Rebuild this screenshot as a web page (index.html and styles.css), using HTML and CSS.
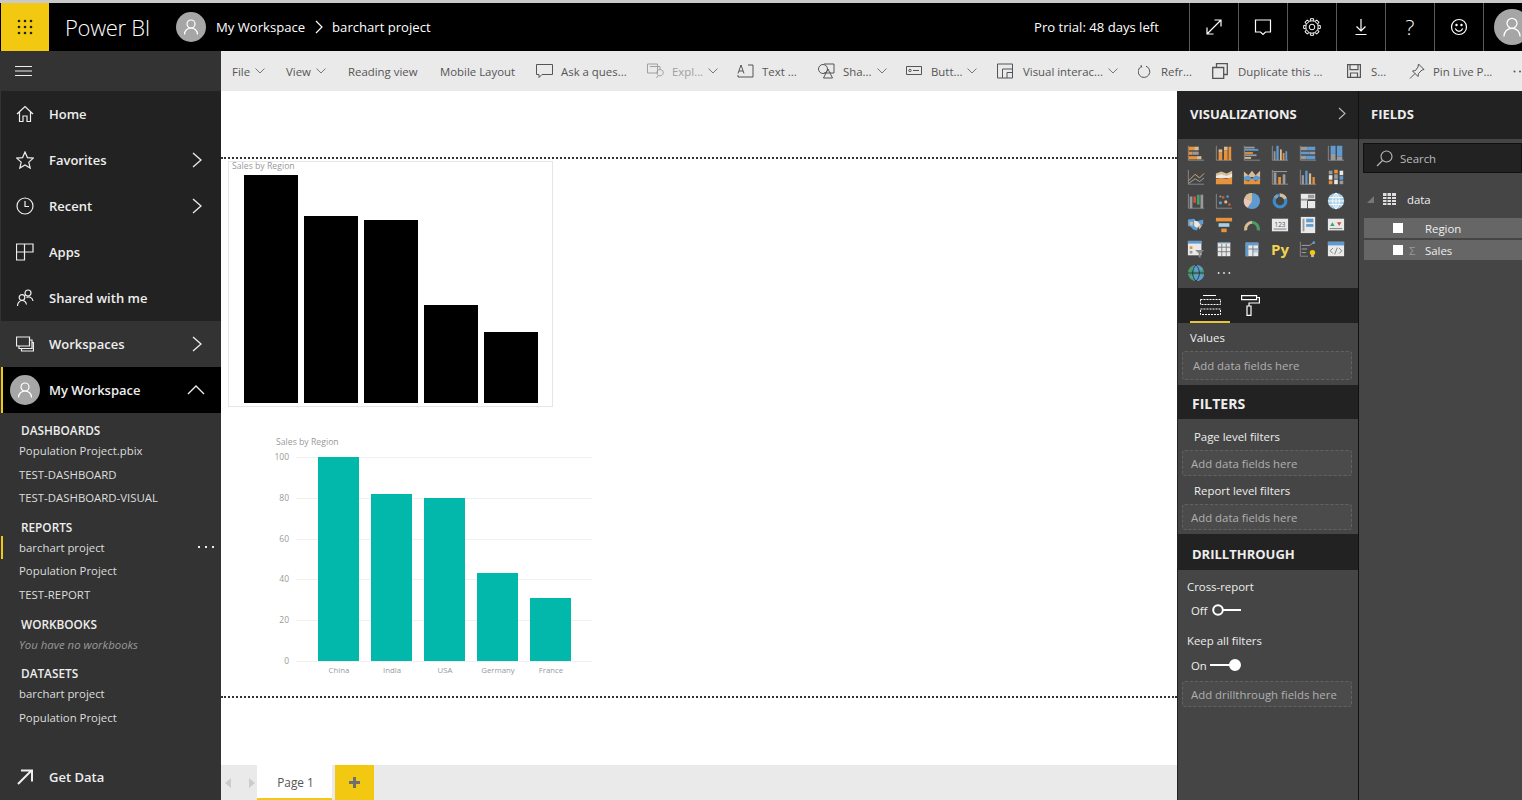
FILE: index.html
```html
<!DOCTYPE html>
<html lang="en">
<head>
    <meta charset="UTF-8">
    <title>Power BI - barchart project</title>
    <link rel="stylesheet" href="styles.css">
</head>
<body>

<div class="topbar">
    <div class="waffle">
        <svg width="16" height="16" viewBox="0 0 16 16" fill="#222"><circle cx="2" cy="2" r="1.3"/><circle cx="8" cy="2" r="1.3"/><circle cx="14" cy="2" r="1.3"/><circle cx="2" cy="8" r="1.3"/><circle cx="8" cy="8" r="1.3"/><circle cx="14" cy="8" r="1.3"/><circle cx="2" cy="14" r="1.3"/><circle cx="8" cy="14" r="1.3"/><circle cx="14" cy="14" r="1.3"/></svg>
    </div>
    <div class="brand">Power BI</div>
    <div class="avatar">
        <svg width="16" height="16" viewBox="0 0 16 16" fill="none" stroke="#fff" stroke-width="1.2"><circle cx="8" cy="5" r="4"/><path d="M1.500 15.500c0-4 3-6.500 6.500-6.500s6.500 2.500 6.500 6.500"/></svg>
    </div>
    <div class="crumb">My Workspace</div>
    <svg class="crumb-sep" width="8" height="14" viewBox="0 0 8 14" fill="none" stroke="#fff" stroke-width="1.2"><path d="M1 1l6 6-6 6"/></svg>
    <div class="crumb">barchart project</div>
    <div class="trial">Pro trial: 48 days left</div>
    <div class="topicon"><svg width="18" height="18" viewBox="0 0 18 18" fill="none" stroke="#fff" stroke-width="1.2"><path d="M2 16L16 2M9.500 2H16V8.500M2 9.500V16H8.500"/></svg></div>
    <div class="topicon"><svg width="18" height="18" viewBox="0 0 18 18" fill="none" stroke="#fff" stroke-width="1.2"><path d="M1.500 2h15v12h-5l-2.500 2.500L6.500 14h-5z"/></svg></div>
    <div class="topicon"><svg width="18" height="18" viewBox="0 0 18 18" fill="none" stroke="#fff" stroke-width="1"><circle cx="9" cy="9" r="2.800"/><circle cx="9" cy="9" r="6.200"/><path id="tooth" d="M7.200 2.900L7.500 .7h3l.3 2.200M7.200 15.100l.3 2.200h3l.3-2.200"/><use href="#tooth" transform="rotate(45 9 9)"/><use href="#tooth" transform="rotate(90 9 9)"/><use href="#tooth" transform="rotate(135 9 9)"/></svg></div>
    <div class="topicon"><svg width="18" height="18" viewBox="0 0 18 18" fill="none" stroke="#fff" stroke-width="1.2"><path d="M9 1v12M4.500 8.500L9 13l4.500-4.500M3.500 16.500h11"/></svg></div>
    <div class="topicon help">?</div>
    <div class="topicon"><svg width="18" height="18" viewBox="0 0 18 18" fill="none" stroke="#fff" stroke-width="1.2"><circle cx="9" cy="9" r="7.500"/><path d="M5.200 10.500c1 2 2.300 2.800 3.800 2.800s2.800-.8 3.800-2.800"/><circle cx="6.500" cy="7" r=".6"/><circle cx="11.500" cy="7" r=".6"/></svg></div>
    <div class="topicon last">
        <div class="avatar big">
            <svg width="20" height="20" viewBox="0 0 16 16" fill="none" stroke="#fff" stroke-width="1"><circle cx="8" cy="5" r="4"/><path d="M1.500 15.500c0-4 3-6.500 6.500-6.500s6.500 2.500 6.500 6.500"/></svg>
        </div>
    </div>
</div>

<div class="below">
    <div class="sidebar">
        <div class="burger">
            <svg width="17" height="10" viewBox="0 0 17 10" stroke="#eee" stroke-width="1"><path d="M0 .5h17M0 5h17M0 9.500h17"/></svg>
        </div>
        <div class="nav-row">
            <svg class="nav-icon" width="18" height="18" viewBox="0 0 18 18" fill="none" stroke="#eee" stroke-width="1.200"><path d="M1 9l8-7.500L17 9M3.500 7v9.500h3.500v-5.500h4v5.500h3.500V7"/></svg>
            <span>Home</span>
        </div>
        <div class="nav-row">
            <svg class="nav-icon" width="18" height="18" viewBox="0 0 18 18" fill="none" stroke="#eee" stroke-width="1.200"><path d="M9 1l2.400 5.600 6 .5-4.600 4 1.400 6L9 14l-5.200 3.100 1.400-6-4.600-4 6-.5z"/></svg>
            <span>Favorites</span>
            <svg class="nav-arrow" width="10" height="16" viewBox="0 0 10 16" fill="none" stroke="#eee" stroke-width="1.300"><path d="M1 1l8 7-8 7"/></svg>
        </div>
        <div class="nav-row">
            <svg class="nav-icon" width="18" height="18" viewBox="0 0 18 18" fill="none" stroke="#eee" stroke-width="1.200"><circle cx="9" cy="9" r="8"/><path d="M9 4v5.500h4"/></svg>
            <span>Recent</span>
            <svg class="nav-arrow" width="10" height="16" viewBox="0 0 10 16" fill="none" stroke="#eee" stroke-width="1.300"><path d="M1 1l8 7-8 7"/></svg>
        </div>
        <div class="nav-row">
            <svg class="nav-icon" width="18" height="18" viewBox="0 0 18 18" fill="none" stroke="#eee" stroke-width="1.200"><path d="M.5 1h8v8h-8zM8.500 1h8.500v8h-8.500M.5 9h8v8h-8z"/></svg>
            <span>Apps</span>
        </div>
        <div class="nav-row">
            <svg class="nav-icon" width="18" height="18" viewBox="0 0 18 18" fill="none" stroke="#eee" stroke-width="1.200"><circle cx="12" cy="4" r="3"/><circle cx="6" cy="8.500" r="2.800"/><path d="M1.500 17c0-3 2-5.500 4.500-5.500s4 1.500 4.500 4M10.500 8.500c2-1.500 6-.5 6.500 3.500"/></svg>
            <span>Shared with me</span>
        </div>
        <div class="nav-row alt">
            <svg class="nav-icon" width="18" height="18" viewBox="0 0 18 18" fill="none" stroke="#eee" stroke-width="1.200"><path d="M.5 2h13v9H.5zM3 11v2.500h13V5h-2.500M5.500 13.500V16h12V7.500H16"/></svg>
            <span>Workspaces</span>
            <svg class="nav-arrow" width="10" height="16" viewBox="0 0 10 16" fill="none" stroke="#eee" stroke-width="1.300"><path d="M1 1l8 7-8 7"/></svg>
        </div>
        <div class="nav-row mine">
            <div class="avatar">
                <svg width="16" height="16" viewBox="0 0 16 16" fill="none" stroke="#fff" stroke-width="1.200"><circle cx="8" cy="5" r="4"/><path d="M1.500 15.500c0-4 3-6.500 6.500-6.500s6.500 2.500 6.500 6.500"/></svg>
            </div>
            <span>My Workspace</span>
            <svg class="nav-arrow up" width="18" height="10" viewBox="0 0 18 10" fill="none" stroke="#eee" stroke-width="1.300"><path d="M1 9l8-8 8 8"/></svg>
        </div>

        <div class="sec">
            <div class="sec-head">DASHBOARDS</div>
            <div class="sec-item">Population Project.pbix</div>
            <div class="sec-item">TEST-DASHBOARD</div>
            <div class="sec-item">TEST-DASHBOARD-VISUAL</div>
        </div>
        <div class="sec">
            <div class="sec-head">REPORTS</div>
            <div class="sec-item current">barchart project<span class="more"></span></div>
            <div class="sec-item">Population Project</div>
            <div class="sec-item">TEST-REPORT</div>
        </div>
        <div class="sec">
            <div class="sec-head">WORKBOOKS</div>
            <div class="sec-item none">You have no workbooks</div>
        </div>
        <div class="sec">
            <div class="sec-head">DATASETS</div>
            <div class="sec-item">barchart project</div>
            <div class="sec-item">Population Project</div>
        </div>

        <div class="nav-row getdata">
            <svg class="nav-icon" width="18" height="18" viewBox="0 0 18 18" fill="none" stroke="#eee" stroke-width="2"><path d="M2 16L15.500 2.500M5 2.500h11v11"/></svg>
            <span>Get Data</span>
        </div>
    </div>

    <div class="main">
        <div class="toolbar">
            <div class="tb">File <svg class="chev" width="10" height="6" viewBox="0 0 10 6"><path d="M.5.5L5 5 9.500.5"/></svg></div>
            <div class="tb">View <svg class="chev" width="10" height="6" viewBox="0 0 10 6"><path d="M.5.5L5 5 9.500.5"/></svg></div>
            <div class="tb">Reading view</div>
            <div class="tb">Mobile Layout</div>
            <div class="tb"><svg class="tbi" width="17" height="16" viewBox="0 0 17 16"><path d="M.5 1.500h16v10H6l-3 3v-3H.5z"/></svg>Ask a ques...</div>
            <div class="tb off"><svg class="tbi" width="17" height="16" viewBox="0 0 17 16"><path d="M.5 1h10v9H.5zM3 3.500h10v3M13 6.500a3.200 3.200 0 1 0 .1 0M11 12.500L9.500 15"/></svg>Expl... <svg class="chev" width="10" height="6" viewBox="0 0 10 6"><path d="M.5.5L5 5 9.500.5"/></svg></div>
            <div class="tb"><svg class="tbi" width="17" height="16" viewBox="0 0 17 16"><path d="M1 10.500L4 2l3 8.500M2 8h4M11 2h5v12H1v-2"/></svg>Text ...</div>
            <div class="tb"><svg class="tbi" width="17" height="16" viewBox="0 0 17 16"><circle cx="5" cy="6" r="4.500"/><path d="M6 1h10v9H6M10 6l-4.500 9h9z"/></svg>Sha... <svg class="chev" width="10" height="6" viewBox="0 0 10 6"><path d="M.5.5L5 5 9.500.5"/></svg></div>
            <div class="tb"><svg class="tbi btn" width="16" height="16" viewBox="0 0 16 16"><path d="M.5 3.500h15v8H.5zM7 7.500h6"/><circle cx="4" cy="7.500" r="1.200"/></svg>Butt... <svg class="chev" width="10" height="6" viewBox="0 0 10 6"><path d="M.5.5L5 5 9.500.5"/></svg></div>
            <div class="tb"><svg class="tbi wide" width="16" height="16" viewBox="0 0 16 16"><path d="M.5 1h15v14H.5zM5.500 15V6h10M10 15V9.500h5.500"/></svg>Visual interac... <svg class="chev" width="10" height="6" viewBox="0 0 10 6"><path d="M.5.5L5 5 9.500.5"/></svg></div>
            <div class="tb"><svg class="tbi wide" width="13" height="14" viewBox="0 0 13 14"><path d="M8 2.200a5.800 5.800 0 1 1-4.500.2M3 1l.8 2.500"/></svg>Refr...</div>
            <div class="tb"><svg class="tbi dup" width="16" height="16" viewBox="0 0 16 16"><path stroke-width="1.300" d="M4.500 4V.7h10.800v10.800H12M.7 4.500h11v11H.7z"/></svg>Duplicate this ...</div>
            <div class="tb"><svg class="tbi dup" width="14" height="14" viewBox="0 0 14 14"><path stroke-width="1.200" d="M.6.6h12.800v12.800H.6zM3 .6v5h8V.6M3.500 13.400V9h7v4.400"/></svg>S...</div>
            <div class="tb"><svg class="tbi" width="16" height="16" viewBox="0 0 16 16"><path d="M9.500 1l5.500 5.500-2 .5-3.500 3.500-.5 3L3.500 8l3-.5L9 4zM6 10.500L1 15.500"/></svg>Pin Live P...</div>
            <div class="tb"><svg width="9" height="3" viewBox="0 0 9 3" fill="#555"><circle cx="1.500" cy="1.500" r="1"/><circle cx="7" cy="1.500" r="1"/></svg></div>
        </div>

        <div class="work">
            <div class="report">
                <div class="canvas">
                    <div class="page">
                        <div class="visual-black">
                            <div class="v-title">Sales by Region</div>
                            <div class="black-bars">
                                <div class="bbar" style="height: 228px"></div>
                                <div class="bbar" style="height: 187px"></div>
                                <div class="bbar" style="height: 183px"></div>
                                <div class="bbar" style="height: 98px"></div>
                                <div class="bbar" style="height: 71px"></div>
                            </div>
                        </div>
                        <svg class="visual-chart" width="330" height="250" viewBox="270 432 330 250">
                            <text class="c-title" x="276" y="445">Sales by Region</text>
                            <path class="c-grid" d="M296 457.500H592M296 498.500H592M296 539.500H592M296 579.500H592M296 620.500H592M296 661.500H592"/>
                            <text class="c-y" x="289" y="460">100</text>
                            <text class="c-y" x="289" y="501">80</text>
                            <text class="c-y" x="289" y="542">60</text>
                            <text class="c-y" x="289" y="582">40</text>
                            <text class="c-y" x="289" y="623">20</text>
                            <text class="c-y" x="289" y="664">0</text>
                            <rect class="c-bar" x="318" y="457" width="41" height="204"/>
                            <rect class="c-bar" x="371" y="494" width="41" height="167"/>
                            <rect class="c-bar" x="424" y="498" width="41" height="163"/>
                            <rect class="c-bar" x="477" y="573" width="41" height="88"/>
                            <rect class="c-bar" x="530" y="598" width="41" height="63"/>
                            <text class="c-x" x="339" y="673">China</text>
                            <text class="c-x" x="392" y="673">India</text>
                            <text class="c-x" x="445" y="673">USA</text>
                            <text class="c-x" x="498" y="673">Germany</text>
                            <text class="c-x" x="551" y="673">France</text>
                        </svg>
                    </div>
                </div>
                <div class="tabs">
                    <svg class="tab-nav" width="34" height="10" viewBox="0 0 34 10" fill="#ccc"><path d="M8 0v10L2 5zM26 0v10l6-5z"/></svg>
                    <div class="tab">Page 1</div>
                    <div class="tab-add">
                        <svg width="11" height="11" viewBox="0 0 11 11" fill="#6f6f6f"><path d="M4 0h3v4h4v3H7v4H4V7H0V4h4z"/></svg>
                    </div>
                </div>
            </div>

            <div class="viz">
                <div class="pane-head">VISUALIZATIONS
                    <svg class="pane-arrow" width="8" height="13" viewBox="0 0 8 13" fill="none" stroke="#bbb" stroke-width="1.100"><path d="M1 1l6 5.500L1 12"/></svg>
                </div>
                <div class="viz-icons">
                    <svg viewBox="0 0 20 20"><path class="ax" d="M1.500 2v16H19"/><rect class="o" x="2" y="3" width="6" height="4"/><rect class="t" x="8" y="3" width="5" height="4"/><rect class="o" x="2" y="8.500" width="4" height="3.500"/><rect class="g" x="6" y="8.500" width="7" height="3.500"/><rect class="o" x="2" y="13.500" width="9" height="3.500"/><rect class="t" x="11" y="13.500" width="5" height="3.500"/></svg>
                    <svg viewBox="0 0 20 20"><path class="ax" d="M1.500 2v16H19"/><rect class="o" x="4" y="9" width="4" height="9"/><rect class="t" x="4" y="6" width="4" height="3"/><rect class="o" x="10" y="7" width="4" height="11"/><rect class="t" x="10" y="3" width="4" height="4"/><rect class="o" x="15" y="3" width="3" height="15"/></svg>
                    <svg viewBox="0 0 20 20"><path class="ax" d="M1.500 2v16H19"/><rect class="g" x="2" y="3" width="11" height="2"/><rect class="b" x="2" y="5.500" width="15" height="2"/><rect class="o" x="2" y="9" width="9" height="2"/><rect class="g" x="2" y="11.500" width="13" height="2"/><rect class="t" x="2" y="14.500" width="7" height="2"/></svg>
                    <svg viewBox="0 0 20 20"><path class="ax" d="M1.500 2v16H19"/><rect class="g" x="3" y="8" width="2" height="10"/><rect class="b" x="6" y="2" width="2.500" height="16"/><rect class="t" x="10" y="6" width="2" height="12"/><rect class="o" x="13" y="10" width="2" height="8"/><rect class="b" x="16" y="8" width="2" height="10"/></svg>
                    <svg viewBox="0 0 20 20"><path class="ax" d="M1.500 2v16H19"/><rect class="g" x="2" y="3" width="7" height="4"/><rect class="b" x="9" y="3" width="9" height="4"/><rect class="b" x="2" y="8.500" width="10" height="3"/><rect class="g" x="12" y="8.500" width="6" height="3"/><rect class="g" x="2" y="13" width="6" height="4"/><rect class="b" x="8" y="13" width="10" height="4"/></svg>
                    <svg viewBox="0 0 20 20"><path class="ax" d="M1.500 2v16H19"/><rect class="b" x="4" y="2" width="5.500" height="9"/><rect class="g" x="4" y="11" width="5.500" height="7"/><rect class="b" x="11" y="2" width="6" height="12"/><rect class="g" x="11" y="14" width="6" height="4"/></svg>

                    <svg viewBox="0 0 20 20"><path class="ax" d="M1.500 2v16H19"/><path class="ln-o" d="M2 14l7-7 5 4 5-5"/><path class="ln-g" d="M2 17l7-5 5 3 5-4"/></svg>
                    <svg viewBox="0 0 20 20"><path class="t" d="M1 6l6-2 6 2 6-3v6H1z"/><path class="w" d="M1 9l6-2 6 2 6-3v5H1z"/><path class="o" d="M1 12l6-1 6 1 6-2v8H1z"/></svg>
                    <svg viewBox="0 0 20 20"><path class="t" d="M1 4l5 4 4-5 4 5 5-5v7H1z"/><path class="b" d="M1 10l5-2 4 4 4-4 5 2v4H1z"/><path class="o" d="M1 13l5 2 4-3 4 3 5-3v6H1z"/></svg>
                    <svg viewBox="0 0 20 20"><path class="ax" d="M1.500 2v16H19"/><rect class="g" x="3" y="5" width="3" height="13"/><rect class="o" x="8" y="10" width="3" height="8"/><rect class="g" x="13" y="7" width="3" height="11"/><path class="ln-g" d="M2 4h16"/></svg>
                    <svg viewBox="0 0 20 20"><path class="ax" d="M1.500 2v16H19"/><rect class="g" x="3" y="8" width="2.500" height="10"/><rect class="b" x="7" y="3" width="2.500" height="15"/><rect class="t" x="11" y="6" width="2.500" height="12"/><rect class="o" x="15" y="10" width="2.500" height="8"/></svg>
                    <svg viewBox="0 0 20 20"><rect class="g" x="2" y="3" width="4" height="4"/><rect class="w" x="2" y="8" width="4" height="5"/><rect class="o" x="2" y="14" width="4" height="4"/><rect class="o" x="8" y="2" width="4" height="4"/><rect class="g" x="8" y="7" width="4" height="5"/><rect class="w" x="8" y="13" width="4" height="5"/><rect class="w" x="14" y="3" width="4" height="5"/><rect class="b" x="14" y="9" width="4" height="4"/><rect class="g" x="14" y="14" width="4" height="4"/></svg>

                    <svg viewBox="0 0 20 20"><path class="ax" d="M1.500 2v16H19"/><rect class="g" x="3" y="5" width="3" height="13"/><rect class="r" x="7" y="5" width="3" height="7"/><rect class="gn" x="11" y="3" width="3" height="11"/><rect class="g" x="15" y="3" width="3" height="15"/></svg>
                    <svg viewBox="0 0 20 20"><path class="ax" d="M1.500 2v16H19"/><circle class="b" cx="6" cy="12" r="1.800"/><circle class="r" cx="9" cy="6" r="1.500"/><circle class="t" cx="12" cy="11" r="1.800"/><circle class="b" cx="14" cy="5" r="1.300"/><circle class="r" cx="16" cy="14" r="1.500"/><circle class="g" cx="6" cy="5" r="1.200"/></svg>
                    <svg viewBox="0 0 20 20"><circle class="b" cx="10" cy="10" r="9"/><path class="t" d="M10 10L1.500 7A9 9 0 0 1 10 1z"/><path class="p" d="M10 10L1.500 7A9 9 0 0 0 5 17.500z"/></svg>
                    <svg viewBox="0 0 20 20"><circle class="ring-b" cx="10" cy="10" r="6.500"/><path class="ring-t" d="M10 3.500a6.500 6.500 0 0 1 6 4"/><path class="ring-g" d="M4.500 6.500a6.500 6.500 0 0 1 3-2.500"/></svg>
                    <svg viewBox="0 0 20 20"><rect class="w" x="2" y="2" width="16" height="6"/><rect class="g" x="10" y="3" width="7" height="4"/><rect class="w" x="2" y="9" width="7" height="9"/><rect class="w" x="10" y="10" width="8" height="8"/><rect class="g" x="2" y="7.500" width="8" height="2"/></svg>
                    <svg viewBox="0 0 20 20"><circle class="lb" cx="10" cy="10" r="9"/><path class="ln-w" d="M1 10h18M2 6h16M2 14h16M10 1v18M10 1c-5 5-5 13 0 18M10 1c5 5 5 13 0 18"/></svg>

                    <svg viewBox="0 0 20 20"><path class="b" d="M1 4l7-1 2 3 8-2v5l-5 2-2 5-4-1-3-3-3-1z"/><path class="w" d="M8 5l4 1 3 4-4 3-3-2z"/><path class="t" d="M3 6l4 1-1 4-3-1zM12 11l5-1-3 5z"/></svg>
                    <svg viewBox="0 0 20 20"><rect class="o" x="1" y="2" width="18" height="4"/><rect class="lb" x="4" y="8" width="12" height="4"/><rect class="o" x="7" y="14" width="6" height="4"/></svg>
                    <svg viewBox="0 0 20 20"><path class="ring-t" d="M3 16a7.500 7.500 0 0 1 7-9"/><path class="ring-gn" d="M10 7a7.500 7.500 0 0 1 7 9"/></svg>
                    <svg viewBox="0 0 20 20"><rect class="w" x="1" y="3" width="18" height="14"/><text class="mini" x="10" y="12">123</text><path class="ln-d" d="M3 14.500h14"/></svg>
                    <svg viewBox="0 0 20 20"><rect class="w" x="2" y="1" width="16" height="18"/><rect class="b" x="8" y="3" width="8" height="4"/><rect class="g" x="4" y="3" width="2" height="14"/><rect class="b" x="8" y="9" width="8" height="3"/></svg>
                    <svg viewBox="0 0 20 20"><rect class="w" x="1" y="3" width="18" height="13"/><path class="gn" d="M3.500 11l2.500-4 2.500 4z"/><path class="r" d="M11 7h5l-2.500 4z"/><path class="ln-d" d="M3 14h14"/></svg>

                    <svg viewBox="0 0 20 20"><rect class="w" x="1" y="1" width="15" height="16"/><rect class="b" x="1" y="1" width="15" height="3"/><rect class="o" x="3" y="7" width="3" height="3"/><rect class="g" x="3" y="12" width="3" height="3"/><path class="g2" d="M9 11h10l-4 4v5l-2-1v-4z"/></svg>
                    <svg viewBox="0 0 20 20"><rect class="w" x="3" y="3" width="14" height="15"/><path class="ln-d" d="M3 8h14M3 13h14M7.500 3v15M12.500 3v15"/><rect class="lb" x="3" y="3" width="14" height="1.500"/></svg>
                    <svg viewBox="0 0 20 20"><rect class="w" x="3" y="3" width="14" height="15"/><rect class="b" x="3" y="3" width="14" height="3"/><rect class="b" x="3" y="3" width="3" height="15"/><rect class="lb" x="11" y="10" width="6" height="4"/><path class="ln-d" d="M6 10h11M11 6v12"/></svg>
                    <div class="py">Py</div>
                    <svg viewBox="0 0 20 20"><path class="ax" d="M1.500 2v16H10"/><path class="ln-g" d="M3 6h9M3 10h6M3 14h5M12 6l4-3"/><circle class="b" cx="16.500" cy="3" r="1.500"/><circle class="y" cx="15" cy="14" r="3"/><rect class="t" x="13.500" y="16" width="3" height="3"/></svg>
                    <svg viewBox="0 0 20 20"><rect class="w" x="1" y="2" width="18" height="16"/><rect class="b" x="1" y="2" width="18" height="4"/><path class="ln-d" d="M6.500 9L3.500 12l3 3M13.500 9l3 3-3 3M11.500 8.500l-3 7.500"/></svg>

                    <svg viewBox="0 0 20 20"><circle class="gn" cx="10" cy="10" r="9"/><path class="b" d="M10 1a9 9 0 0 1 8 5l-7 3-6-3zM3 14l8-3 8 1a9 9 0 0 1-7 7z"/><path class="ln-k" d="M1 10h18M10 1c-5 5-5 13 0 18M10 1c5 5 5 13 0 18"/></svg>
                    <svg viewBox="0 0 20 20"><circle class="w" cx="4" cy="10" r="1"/><circle class="w" cx="10" cy="10" r="1"/><circle class="w" cx="16" cy="10" r="1"/></svg>
                </div>
                <div class="viz-tabs">
                    <div class="viz-tab on">
                        <svg width="21" height="20" viewBox="0 0 21 20" fill="none" stroke="#fff"><path d="M3 .5h13"/><path stroke-dasharray="2 1" d="M.5 4.500h20v5H.5zM.5 14h20v5.500H.5z"/></svg>
                    </div>
                    <div class="viz-tab">
                        <svg width="19" height="21" viewBox="0 0 19 21" fill="none" stroke="#fff" stroke-width="1.200"><path d="M.6.6h15v4H.6zM15.600 2.500h2.800v5.500H8v3M6 11h4v9.400H6z"/></svg>
                    </div>
                </div>

                <div class="well-label values">Values</div>
                <div class="well tall"><span class="well-text indent">Add data fields here</span></div>

                <div class="sec-bar filters">FILTERS</div>
                <div class="well-label first">Page level filters</div>
                <div class="well"><span class="well-text">Add data fields here</span></div>
                <div class="well-label">Report level filters</div>
                <div class="well"><span class="well-text">Add data fields here</span></div>

                <div class="sec-bar drill">DRILLTHROUGH</div>
                <div class="opt-label">Cross-report</div>
                <div class="toggle">Off
                    <svg width="32" height="14" viewBox="0 0 32 14" fill="none" stroke="#fff" stroke-width="2"><circle cx="9" cy="7" r="4.800"/><path d="M14 7h18"/></svg>
                </div>
                <div class="opt-label keep">Keep all filters</div>
                <div class="toggle on">On
                    <svg width="32" height="14" viewBox="0 0 32 14" fill="#fff" stroke="#fff" stroke-width="2"><path d="M0 7h20"/><circle cx="25" cy="7" r="5"/></svg>
                </div>
                <div class="well drillwell"><span class="well-text">Add drillthrough fields here</span></div>
            </div>

            <div class="fields">
                <div class="pane-head">FIELDS</div>
                <div class="search">
                    <svg width="17" height="17" viewBox="0 0 17 17" fill="none" stroke="#bbb" stroke-width="1.100"><circle cx="10.500" cy="6.500" r="5.500"/><path d="M6.500 10.500L1 16"/></svg>
                    Search
                </div>
                <div class="table-row">
                    <svg class="tri" width="7" height="7" viewBox="0 0 7 7" fill="#777"><path d="M7 0v7H0z"/></svg>
                    <svg class="grid-ic" width="13" height="12" viewBox="0 0 13 12" fill="#ddd"><path d="M0 0h13v12H0z"/><path stroke="#444" d="M0 3.500h13M0 6.500h13M0 9.500h13M4 0v12M8.500 0v12"/></svg>
                    <span>data</span>
                </div>
                <div class="field-row">
                    <span class="check"></span><span class="sigma"></span>Region
                </div>
                <div class="field-row">
                    <span class="check"></span><span class="sigma">&Sigma;</span>Sales
                </div>
            </div>
        </div>
    </div>
</div>

</body>
</html>
```

FILE: styles.css
```css
* {
    box-sizing: border-box;
}

html, body {
    margin: 0;
    height: 100%;
}

body {
    width: 1522px;
    height: 800px;
    overflow: hidden;
    font-family: "Open Sans", "Noto Sans", sans-serif;
    font-size: 11.400px;
    color: #eee;
    background-color: #333;
    display: flex;
    flex-direction: column;
}

/* top black bar */
.topbar {
    height: 51px;
    flex: none;
    display: flex;
    align-items: center;
    background-color: #000;
    border-top: 3px solid #c9c9c9;
    padding-left: 1px;
}

.waffle {
    width: 48px;
    height: 48px;
    background-color: #f2c811;
    display: flex;
    align-items: center;
    justify-content: center;
}

.brand {
    margin-left: 16px;
    width: 111px;
    font-size: 22px;
    font-weight: 300;
    letter-spacing: -0.3px;
    color: #fff;
}

.avatar {
    width: 30px;
    height: 30px;
    border-radius: 50%;
    background-color: #a6a6a6;
    display: flex;
    align-items: center;
    justify-content: center;
    flex: none;
}

.avatar.big {
    width: 36px;
    height: 36px;
}

.crumb {
    margin-left: 10px;
    font-size: 13.100px;
    color: #fff;
}

.crumb-sep {
    margin-left: 10px;
    margin-right: -1px;
}

.trial {
    margin-left: auto;
    width: 155px;
    font-size: 13.100px;
    color: #fff;
}

.topicon {
    width: 49px;
    height: 48px;
    border-left: 1px solid #5a5a5a;
    display: flex;
    align-items: center;
    justify-content: center;
    flex: none;
}

.topicon.help {
    font-size: 21px;
    font-weight: 300;
    color: #fff;
}

.topicon.last {
    width: 39px;
    padding-left: 10px;
    justify-content: flex-start;
    overflow: hidden;
}

/* everything under the top bar */
.below {
    flex: 1;
    display: flex;
    min-height: 0;
}

/* left navigation */
.sidebar {
    width: 221px;
    flex: none;
    background-color: #333;
    display: flex;
    flex-direction: column;
    padding-left: 1px;
}

.burger {
    height: 40px;
    display: flex;
    align-items: center;
    padding-left: 14px;
}

.nav-row {
    height: 46px;
    flex: none;
    background-color: #222;
    display: flex;
    align-items: center;
    padding-left: 15px;
    font-size: 13px;
    font-weight: 600;
    color: #eee;
}

.nav-row span {
    margin-left: 15px;
}

.nav-icon {
    flex: none;
}

.nav-arrow {
    margin-left: auto;
    margin-right: 19px;
}

.nav-arrow.up {
    margin-right: 16px;
}

.nav-row.alt {
    background-color: #333;
}

.nav-row.mine {
    background-color: #000;
    border-left: 2px solid #f2c811;
    padding-left: 7px;
}

.nav-row.mine span {
    margin-left: 9px;
}

.nav-row.getdata {
    background-color: #333;
    margin-top: auto;
}

.sec {
    padding-top: 8px;
}

.sec-head {
    height: 18px;
    line-height: 18px;
    padding-left: 20px;
    font-size: 11.800px;
    font-weight: 600;
    color: #eee;
}

.sec-item {
    height: 23.600px;
    line-height: 23.600px;
    padding-left: 18px;
    font-size: 11.400px;
    color: #ddd;
    position: relative;
}

.sec-item.current {
    border-left: 2px solid #f2c811;
    padding-left: 16px;
}

.sec-item.none {
    font-style: italic;
    color: #999;
}

/* three dots drawn with one box shadow each side */
.more {
    position: absolute;
    right: 14px;
    top: 10px;
    width: 2px;
    height: 2px;
    background-color: #eee;
    box-shadow: -7px 0 0 #eee, 7px 0 0 #eee;
}

/* middle + right */
.main {
    flex: 1;
    min-width: 0;
    display: flex;
    flex-direction: column;
}

.toolbar {
    height: 40px;
    flex: none;
    background-color: #eaeaea;
    padding-left: 11px;
    display: grid;
    grid-template-columns: 54px 62px 92px 96px 111px 90px 81px 88px 91px 141px 74px 135px 62px 104px 20px;
    align-items: center;
    color: #555;
    font-size: 11.400px;
    white-space: nowrap;
    overflow: hidden;
}

.tb {
    display: flex;
    align-items: center;
}

.tb.off {
    color: #a0a0a0;
}

.tbi {
    margin-right: 8px;
    fill: none;
    stroke: #555;
    stroke-width: 1;
    flex: none;
}

.tb.off .tbi {
    stroke: #a0a0a0;
}

.tbi.btn {
    margin-right: 9px;
}

.tbi.wide {
    margin-right: 10px;
}

.tbi.dup {
    margin-right: 10px;
}

.chev {
    margin-left: 5px;
    fill: none;
    stroke: #777;
    stroke-width: 1;
    flex: none;
}

.work {
    flex: 1;
    display: flex;
    min-height: 0;
}

/* report canvas */
.report {
    width: 956px;
    flex: none;
    display: flex;
    flex-direction: column;
    background-color: #fff;
}

.canvas {
    flex: 1;
    padding-top: 66px;
    min-height: 0;
}

.page {
    position: relative;
    height: 541px;
    border-top: 2px dotted #333;
    border-bottom: 2px dotted #333;
}

.visual-black {
    position: absolute;
    left: 7px;
    top: 2px;
    width: 325px;
    height: 246px;
    border: 1px solid #e6e6e6;
    padding: 0 14px 3px 15px;
    display: flex;
    flex-direction: column;
}

.v-title {
    position: absolute;
    left: 3px;
    top: -2px;
    font-size: 8.700px;
    color: #999;
}

.black-bars {
    flex: 1;
    display: flex;
    align-items: flex-end;
    gap: 6px;
}

.bbar {
    width: 54px;
    flex: none;
    background-color: #000;
}

.visual-chart {
    position: absolute;
    left: 49px;
    top: 273px;
}

.c-title {
    font-size: 8.700px;
    fill: #999;
}

.c-grid {
    stroke: #f0f0f0;
    stroke-width: 1;
    fill: none;
}

.c-y {
    font-size: 8.500px;
    fill: #999;
    text-anchor: end;
}

.c-x {
    font-size: 7.800px;
    fill: #999;
    text-anchor: middle;
}

.c-bar {
    fill: #01b8aa;
}

.tabs {
    height: 35px;
    flex: none;
    background-color: #eaeaea;
    display: flex;
    align-items: stretch;
}

.tab-nav {
    margin-left: 2px;
    align-self: center;
}

.tab {
    width: 75px;
    background-color: #fff;
    border-bottom: 2px solid #f2c811;
    padding-left: 2px;
    display: flex;
    align-items: center;
    justify-content: center;
    color: #555;
    font-size: 11.800px;
}

.tab-add {
    margin-left: 3px;
    width: 39px;
    background-color: #f2c811;
    display: flex;
    align-items: center;
    justify-content: center;
}

/* visualizations pane */
.viz {
    width: 182px;
    flex: none;
    background-color: #454545;
    border-left: 1px solid #222;
    border-right: 1px solid #111;
    overflow: hidden;
}

.pane-head {
    height: 48px;
    background-color: #222;
    display: flex;
    align-items: center;
    padding: 0 0 2px 12px;
    font-size: 13px;
    font-weight: 700;
    color: #eee;
    position: relative;
}

.pane-arrow {
    position: absolute;
    right: 12px;
    top: 16px;
}

.viz-icons {
    height: 149px;
    padding: 2px 0 0 8px;
    display: grid;
    grid-template-columns: repeat(6, 28px);
    grid-auto-rows: 24px;
    align-items: center;
    justify-items: center;
    justify-content: start;
    margin-left: -4px;
}

.viz-icons svg {
    width: 18px;
    height: 18px;
}

.py {
    font-size: 15px;
    font-weight: 700;
    color: #f2d34f;
    line-height: 20px;
}

.ax {
    fill: none;
    stroke: #8d8d8d;
    stroke-width: 1;
}

.o { fill: #e8923c; }
.t { fill: #d9bc93; }
.g { fill: #9a9a9a; }
.b { fill: #5f9bd0; }
.lb { fill: #a9cfe8; }
.w { fill: #e9e9e9; }
.r { fill: #c9573f; }
.gn { fill: #4a9c6a; }
.p { fill: #eec4b4; }
.y { fill: #f2c811; }
.g2 { fill: #888; }

.ln-o, .ln-g, .ln-d, .ln-w, .ln-k {
    fill: none;
    stroke-width: 1;
}

.ln-o { stroke: #e8b27a; }
.ln-g { stroke: #aaa; }
.ln-d { stroke: #777; }
.ln-w { stroke: #fff; }
.ln-k { stroke: #234; }

.ring-b, .ring-t, .ring-g, .ring-gn {
    fill: none;
    stroke-width: 3.500;
}

.ring-b { stroke: #3f8ac9; }
.ring-t { stroke: #d9bc93; }
.ring-g { stroke: #999; }
.ring-gn { stroke: #4a9c6a; }

.mini {
    font-size: 7px;
    fill: #556;
    text-anchor: middle;
}

.viz-tabs {
    height: 35px;
    background-color: #222;
    display: flex;
    padding-left: 12px;
}

.viz-tab {
    width: 40px;
    display: flex;
    align-items: center;
    justify-content: center;
}

.viz-tab.on {
    border-bottom: 2px solid #e8c33c;
}

.well-label {
    height: 18px;
    line-height: 18px;
    margin: 6px 0 4px 16px;
    color: #eee;
}

.well-label.values {
    margin-left: 12px;
}

.well-label.first {
    margin-top: 9px;
}

.well {
    margin: 0 6px 0 4px;
    height: 26px;
    border: 1px dashed #626262;
    border-radius: 3px;
    background-color: #4b4b4b;
    display: flex;
    align-items: center;
    padding-left: 8px;
}

.well.tall {
    height: 29px;
}

.well-text {
    color: #b0b0b0;
}

.well-text.indent {
    margin-left: 2px;
}

.sec-bar {
    background-color: #222;
    display: flex;
    align-items: center;
    padding-left: 14px;
    font-weight: 700;
    color: #eee;
}

.sec-bar.filters {
    margin-top: 5px;
    height: 34px;
    padding-top: 2px;
    font-size: 14px;
}

.sec-bar.drill {
    margin-top: 4px;
    height: 36px;
    padding-top: 3px;
    font-size: 13px;
}

.opt-label {
    height: 18px;
    line-height: 18px;
    margin: 8px 0 0 9px;
    color: #eee;
}

.opt-label.keep {
    margin-top: 13px;
}

.toggle {
    height: 18px;
    margin: 5px 0 0 13px;
    display: flex;
    align-items: center;
    color: #eee;
}

.toggle svg {
    margin-left: 1px;
}

.toggle.on {
    margin-top: 6px;
}

.toggle.on svg {
    margin-left: 3px;
}

.well.drillwell {
    margin-top: 7px;
}

/* fields pane */
.fields {
    flex: 1;
    min-width: 0;
    background-color: #454545;
    overflow: hidden;
}

.search {
    margin: 4px 0 0 4px;
    height: 30px;
    background-color: #222;
    border: 1px solid #111;
    display: flex;
    align-items: center;
    gap: 7px;
    padding-left: 12px;
    color: #bbb;
}

.table-row {
    margin-top: 17px;
    height: 18px;
    display: flex;
    align-items: center;
    padding-left: 8px;
    color: #eee;
}

.grid-ic {
    margin-left: 9px;
}

.table-row span {
    margin-left: 11px;
}

.field-row {
    margin: 0 0 2px 5px;
    height: 20px;
    background-color: #666;
    display: flex;
    align-items: center;
    padding-left: 29px;
    color: #eee;
}

.table-row + .field-row {
    margin-top: 10px;
}

.check {
    width: 10px;
    height: 10px;
    background-color: #fff;
    flex: none;
}

.sigma {
    width: 22px;
    padding-left: 6px;
    color: #999;
    flex: none;
}
```
